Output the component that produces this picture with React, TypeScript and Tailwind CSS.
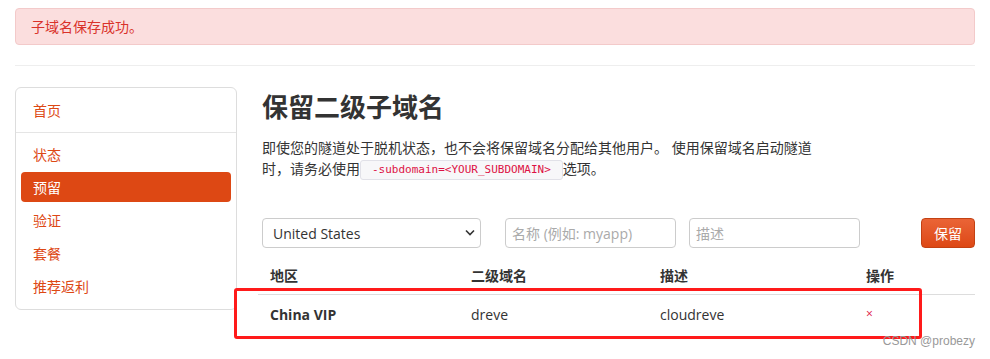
import { useState } from 'react';

const navItems = ['状态', '预留', '验证', '套餐', '推荐返利'];

export default function App() {
  const [region, setRegion] = useState('us');

  return (
    <div
      className="relative w-[990px] h-[359px] overflow-hidden bg-white text-[14px] text-[#333]"
      style={{ fontFamily: '"Open Sans", "Noto Sans CJK SC", sans-serif' }}
    >
      <div className="px-[15px] pt-[8px]">
        <div className="h-[37px] flex items-center px-[15px] rounded-[4px] border border-[#f3caca] bg-[#fbdede] text-[#d9322b]">
          子域名保存成功。
        </div>

        <div className="mt-[20px] border-t border-[#eee]" />

        <div className="mt-[21px] flex gap-[25px]">
          <div className="w-[222px] shrink-0">
            <div className="rounded-[6px] border border-[#ddd] px-[5px] pb-[8px]">
              <div className="h-[44px] flex items-center px-[12px] text-[#dd4814]">首页</div>
              <div className="border-t border-[#e5e5e5] -mx-[5px]" />
              <div className="pt-[6px] flex flex-col gap-[3px]">
                {navItems.map((item) => (
                  <div
                    key={item}
                    className={
                      item === '预留'
                        ? 'h-[30px] flex items-center px-[12px] rounded-[4px] bg-[#dd4814] text-white'
                        : 'h-[30px] flex items-center px-[12px] text-[#dd4814]'
                    }
                  >
                    {item}
                  </div>
                ))}
              </div>
            </div>
          </div>

          <div className="flex-1">
            <h1 className="mt-[4px] text-[26px] font-bold leading-[32px] text-[#333]">保留二级子域名</h1>
            <p className="mt-[14px] w-[560px] leading-[21px]">
              即使您的隧道处于脱机状态，也不会将保留域名分配给其他用户。 使用保留域名启动隧道时，请务必使用
              <code
                className="inline-block align-middle leading-[18px] px-[11px] rounded-[3px] border border-[#e1e1e8] bg-[#f7f7f9] text-[#dd1144] text-[11px]"
                style={{ fontFamily: '"DejaVu Sans Mono", monospace' }}
              >
                -subdomain=&lt;YOUR_SUBDOMAIN&gt;
              </code>
              选项。
            </p>

            <div className="mt-[38px] flex items-center">
              <div className="relative w-[219px]">
                <select
                  value={region}
                  onChange={(e) => setRegion(e.target.value)}
                  className="w-full h-[30px] appearance-none rounded-[4px] border border-[#ccc] bg-white pl-[10px] pr-[24px] text-[14px] text-[#333]"
                >
                  <option value="us">United States</option>
                  <option value="cn">China VIP</option>
                </select>
                <svg
                  className="pointer-events-none absolute right-[6px] top-[11px]"
                  width="10"
                  height="7"
                  viewBox="0 0 10 7"
                >
                  <path d="M1 1.5 L5 5.5 L9 1.5" fill="none" stroke="#333" strokeWidth="1.6" />
                </svg>
              </div>
              <input
                placeholder="名称 (例如: myapp)"
                className="ml-[24px] w-[171px] h-[30px] rounded-[4px] border border-[#ccc] px-[6px] text-[14px] placeholder:text-[#aaa]"
              />
              <input
                placeholder="描述"
                className="ml-[13px] w-[171px] h-[30px] rounded-[4px] border border-[#ccc] px-[6px] text-[14px] placeholder:text-[#aaa]"
              />
              <button className="ml-auto h-[30px] px-[12px] rounded-[4px] border border-[#c34113] bg-gradient-to-b from-[#ea6436] to-[#dd4814] text-white text-[14px]">
                保留
              </button>
            </div>

            <div className="mt-[8px] -ml-[4px]">
              <div className="grid grid-cols-[201px_189px_206px_1fr] h-[39px] items-center px-[12px] font-bold border-b border-[#ddd]">
                <div>地区</div>
                <div>二级域名</div>
                <div>描述</div>
                <div>操作</div>
              </div>
              <div className="grid grid-cols-[201px_189px_206px_1fr] h-[38px] items-center px-[12px]">
                <div className="font-bold">China VIP</div>
                <div>dreve</div>
                <div>cloudreve</div>
                <div className="text-[#dd1144] text-[12px]">×</div>
              </div>
            </div>
          </div>
        </div>
      </div>

      <div className="absolute left-[234px] top-[288px] w-[688px] h-[51px] rounded-[3px] border-[3px] border-[#ff1a1a]" />

      <div
        className="absolute right-[15px] bottom-[9px] text-[12px] text-[#999]"
        style={{ fontFamily: '"Liberation Sans", sans-serif' }}
      >
        CSDN @probezy
      </div>
    </div>
  );
}
